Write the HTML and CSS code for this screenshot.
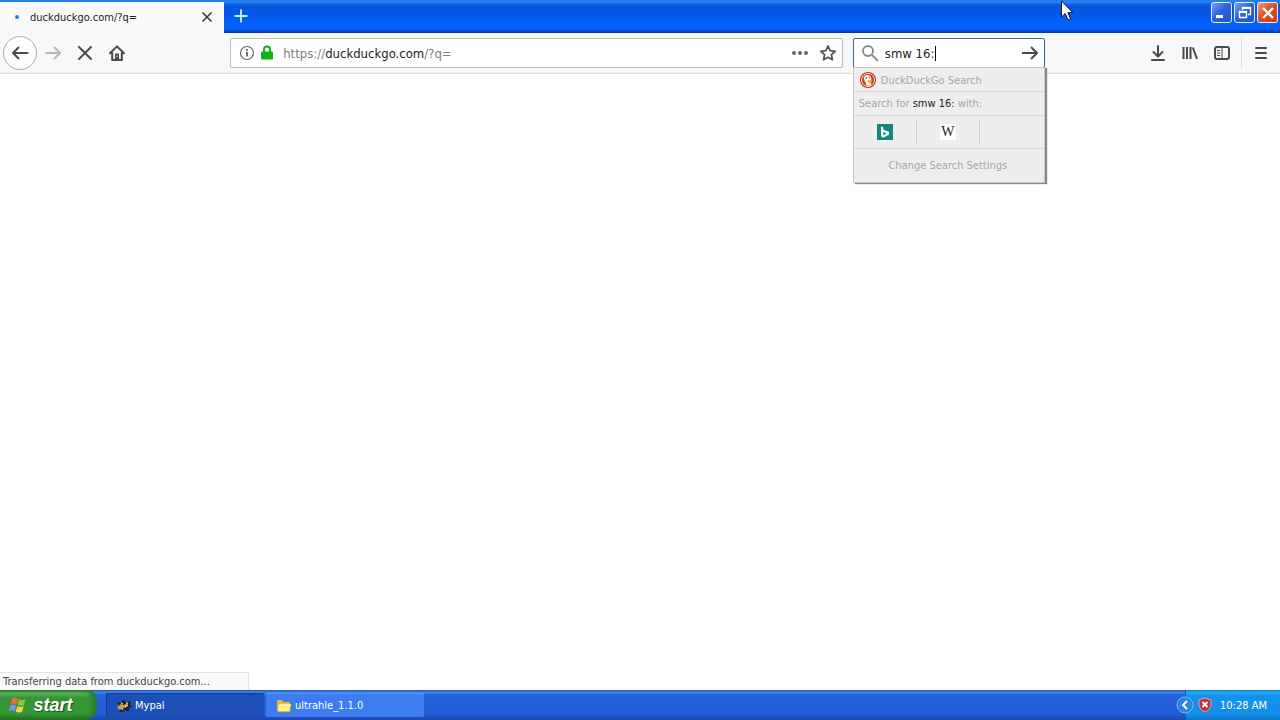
FILE: index.html
```html
<!DOCTYPE html>
<html lang="en">
<head>
<meta charset="utf-8">
<title>duckduckgo.com/?q=</title>
<link rel="stylesheet" href="styles.css">
</head>
<body>
<header class="titlebar">
  <div class="tab">
    <span class="tab-dot"></span>
    <span class="tab-title">duckduckgo.com/?q=</span>
    <button class="tab-close" aria-label="Close tab"><svg width="12" height="12" viewBox="0 0 12 12"><path d="M1.500 1.500l9 9M10.500 1.500l-9 9" stroke="#333" stroke-width="1.500"/></svg></button>
  </div>
  <button class="new-tab" aria-label="New tab"><svg width="16" height="16" viewBox="0 0 16 16"><path d="M8 1.500v13M1.500 8h13" stroke="#d5edff" stroke-width="1.800"/></svg></button>
  <div class="window-buttons">
    <button class="win" aria-label="Minimize"><svg width="20" height="20" viewBox="0 0 20 20"><path d="M4 13.500h7" stroke="#fff" stroke-width="3"/></svg></button>
    <button class="win" aria-label="Restore"><svg width="20" height="20" viewBox="0 0 20 20" fill="none" stroke="#fff"><path d="M7.500 7V4.500h8v7H13" stroke-width="1.400"/><path d="M7 5h9" stroke-width="2"/><path d="M4.500 8.500h7v6h-7z" stroke-width="1.400"/><path d="M4 9h8" stroke-width="2"/></svg></button>
    <button class="win win-close" aria-label="Close"><svg width="20" height="20" viewBox="0 0 20 20"><path d="M5 5l10 10M15 5L5 15" stroke="#fff" stroke-width="2.300"/></svg></button>
  </div>
  <svg class="pointer" width="14" height="22" viewBox="0 0 14 22"><path d="M1.500 1v16l3.700-3.500 2.900 6.500 2.500-1.100-2.800-6.300h4.900z" fill="#fff" stroke="#111830"/></svg>
</header>

<nav class="toolbar">
  <div class="nav-buttons">
    <button class="icon back" aria-label="Back"><svg width="18" height="16" viewBox="0 0 18 16"><path d="M16.500 8H2M7.500 2.500L2 8l5.500 5.500" class="line"/></svg></button>
    <button class="icon" aria-label="Forward" disabled><svg width="18" height="16" viewBox="0 0 18 16"><path d="M2 8h14M10.500 2.500L16 8l-5.500 5.500" class="line faint"/></svg></button>
    <button class="icon" aria-label="Stop"><svg width="16" height="16" viewBox="0 0 16 16"><path d="M2 2l12 12M14 2L2 14" class="line"/></svg></button>
    <button class="icon" aria-label="Home"><svg width="16" height="16" viewBox="0 0 16 16"><path d="M1 8.300L8 1.400l7 6.900M3.200 8v6.900h9.600V8" class="line"/><path d="M6 15V8.500h4V15z" fill="#4a4a4c"/><path d="M8 10.500v1.500" stroke="#f8f8f8"/></svg></button>
  </div>
  <div class="spring"></div>
  <div class="address">
    <svg width="16" height="16" viewBox="0 0 16 16"><circle cx="8" cy="8" r="6.500" fill="none" stroke="#666" stroke-width="1.200"/><path d="M8 7v4.500M8 4v1.800" stroke="#555" stroke-width="1.700"/></svg>
    <svg width="14" height="16" viewBox="0 0 14 16"><path d="M4 7V4.500a3 3 0 016 0V7" fill="none" stroke="#12b312" stroke-width="2"/><rect x="1" y="6.500" width="12" height="8" rx="1" fill="#12b312"/></svg>
    <a class="url" href="#">https://<span class="host">duckduckgo.com</span>/?q=</a>
    <button class="icon small" aria-label="Page actions"><svg width="18" height="16" viewBox="0 0 18 16" fill="#666"><circle cx="3" cy="8" r="2"/><circle cx="9" cy="8" r="2"/><circle cx="15" cy="8" r="2"/></svg></button>
    <button class="icon small" aria-label="Bookmark"><svg width="18" height="18" viewBox="0 0 18 18"><path d="M9 2l2.100 4.700 5.100.6-3.800 3.400 1 5L9 13.200l-4.400 2.500 1-5L1.800 7.300l5.100-.6z" fill="none" stroke="#555" stroke-width="1.800" stroke-linejoin="round"/></svg></button>
  </div>
  <div class="search">
    <svg width="18" height="18" viewBox="0 0 18 18" fill="none" stroke="#8a8a8a" stroke-width="1.800"><circle cx="7" cy="7" r="5"/><path d="M11 11l6 6"/></svg>
    <input class="query" aria-label="Search" value="smw 16:">
    <span class="caret"></span>
    <button class="icon small" aria-label="Go"><svg width="18" height="16" viewBox="0 0 18 16"><path d="M1 8h15M10 2l6 6-6 6" class="line thin"/></svg></button>
    <div class="popup">
      <div class="engine">
        <svg width="16" height="16" viewBox="0 0 16 16"><circle cx="8" cy="8" r="8" fill="#c22b1b"/><circle cx="8" cy="8" r="6.600" fill="#d8401f" stroke="#ffe9d9" stroke-width=".9"/><path d="M3.800 6C4 3.500 6 2.500 8.500 3.200c2.500.6 3 2.500 2.700 4.500l-.7 2.500 1 2.800-3 1-2.500-1C6.500 10.500 4 9 3.800 6z" fill="#fff4e6"/><path d="M7.500 8.200h5L11 10.800 8 10z" fill="#f3a61a"/><circle cx="6.300" cy="6" r=".8" fill="#345"/><circle cx="9.300" cy="5.600" r=".7" fill="#345"/></svg>
        <span>DuckDuckGo Search</span>
      </div>
      <div class="with">Search for <b>smw 16:</b> with:</div>
      <div class="engines">
        <button class="one" aria-label="Bing"><svg width="16" height="16" viewBox="0 0 16 16"><path d="M0 0h16v16H0z" fill="#12897b"/><path d="M4 2.500l2.300.8v2.400l5.700 2v3l-5.700 3L4 12.300zM6.300 7.800v3.400l3-1.800z" fill="#fff" fill-rule="evenodd"/></svg></button>
        <button class="one" aria-label="Wikipedia"><span class="wiki">W</span></button>
      </div>
      <button class="settings">Change Search Settings</button>
    </div>
  </div>
  <div class="spring"></div>
  <div class="tools">
    <button class="icon" aria-label="Downloads"><svg width="16" height="18" viewBox="0 0 16 18"><path d="M8 2v10M3.500 8L8 12.500 12.500 8M2 16h12" class="line"/></svg></button>
    <button class="icon" aria-label="Library"><svg width="16" height="16" viewBox="0 0 16 16"><path d="M1.500 2v12M5 2v12M8.500 2v12M10.800 2.500l4.200 11.500" class="line thin"/></svg></button>
    <button class="icon" aria-label="Sidebars"><svg width="16" height="16" viewBox="0 0 16 16"><rect x="1" y="2" width="14" height="12" rx="2" class="line"/><path d="M8 2v12M3 5.500h3M3 8h3M3 10.500h3" stroke="#4a4a4c"/></svg></button>
  </div>
  <div class="menu"><button class="icon" aria-label="Menu"><svg width="14" height="14" viewBox="0 0 14 14"><path d="M2 2h10M2 7h10M2 12h10" class="line"/></svg></button></div>
</nav>

<main class="page"><div class="status">Transferring data from duckduckgo.com...</div></main>

<footer class="taskbar">
  <button class="start">
    <svg width="19" height="18" viewBox="0 0 19 18"><path d="M3 3c2-1.500 4-1.500 6-.2L7.500 8.500c-2-1.200-4-1.200-6 .2z" fill="#ed6b34"/><path d="M10 3.200c2 1 4 1.200 6.500-.2L15 8.700c-2 1.300-4.300 1.300-6.300.1z" fill="#82cc3e"/><path d="M1.200 9.700c2-1.500 4-1.400 6-.2l-1.500 5.700c-2-1.200-4-1.200-6 .2z" fill="#6a98f4"/><path d="M8.300 10c2 1.100 4.200 1.200 6.400-.1l-1.500 5.700c-2.200 1.300-4.300 1.200-6.400 0z" fill="#f8d33e"/></svg>
    <span>start</span>
  </button>
  <button class="task pressed">
    <svg width="16" height="16" viewBox="0 0 16 16"><path d="M0 4l5 1 2-3 3 2 5-1-1 4 2 2-3 1v3h-3l-1-2-2 3H3l2-4-4-1 2-2z" fill="#242424"/><path d="M1 9l4-3 3 1 4-2-1 4-4 1-3 2z" fill="#d79b43"/><path d="M5 5l2 1M9 9l3-2M6 12l1-2M10 5h2" stroke="#eee"/></svg>
    <span>Mypal</span>
  </button>
  <button class="task">
    <svg width="16" height="16" viewBox="0 0 16 16"><path d="M1 3.500Q1 2 2.500 2H6l1.500 2H13q1 0 1 1v8H2q-1 0-1-1z" fill="#e7bd38"/><path d="M3 6h12.500L14 14H2z" fill="#fff094"/><path d="M2 14h12l1.500-8" fill="none" stroke="#9b812b"/></svg>
    <span>ultrahle_1.1.0</span>
  </button>
  <div class="tray">
    <button class="expand" aria-label="Show hidden icons"><svg width="18" height="18" viewBox="0 0 18 18"><circle cx="9" cy="9" r="8" fill="#2b83df" stroke="#6dbbf4"/><path d="M11 5L7 9l4 4" fill="none" stroke="#fff" stroke-width="2"/></svg></button>
    <svg width="14" height="16" viewBox="0 0 14 16"><path d="M7 1l6 2v4c0 4-2.500 6.500-6 8-3.500-1.500-6-4-6-8V3z" fill="#c72d3c" stroke="#dba4b5"/><path d="M4.500 5l5 5M9.500 5l-5 5" stroke="#fff" stroke-width="1.800"/></svg>
    <time>10:28 AM</time>
  </div>
</footer>
</body>
</html>
```
FILE: styles.css
```css
* { box-sizing: border-box; }
body {
  margin: 0;
  min-height: 100vh;
  display: flex;
  flex-direction: column;
  background: #fff;
  color: #222;
  font: 11px/16px Tahoma, "DejaVu Sans Condensed", "Noto Sans", sans-serif;
}
button {
  display: flex;
  align-items: center;
  justify-content: center;
  margin: 0;
  padding: 0;
  border: 0;
  background: none;
  color: inherit;
  font: inherit;
}
svg { display: block; flex: none; }

.titlebar {
  position: relative;
  display: flex;
  height: 33px;
  background: linear-gradient(#1c7ce8 0, #2884f4 2px, #0a5ae0 5px, #0355e4 12px, #0362fb 24px, #0560fa 29px, #0340c0 32px, #02309c);
}
.tab {
  display: flex;
  align-items: center;
  width: 224px;
  margin-top: 2px;
  padding: 0 10px 1px 15px;
  background: #f9f9fa;
}
.tab-dot { width: 4px; height: 4px; border-radius: 50%; background: #2480e0; }
.tab-title { flex: 1; padding: 1px 0 0 11px; }
.tab-close { width: 14px; height: 16px; }
.new-tab { width: 34px; padding-bottom: 1px; }
.window-buttons { display: flex; gap: 2px; margin: 2px 2px 0 auto; }
.win {
  width: 21px;
  height: 21px;
  border: 1px solid #e4eeff;
  border-radius: 3px;
  background: linear-gradient(135deg, #789ff3, #2d62dc 45%, #1d54d0);
}
.win-close { background: linear-gradient(135deg, #ef9a7d, #dc4a20 50%, #c83b11); }
.pointer { position: absolute; left: 83%; top: 0; margin-left: -2px; }

.toolbar {
  display: flex;
  align-items: center;
  height: 41px;
  padding: 0 3px;
  border-bottom: 1px solid #dcdcdc;
  background: #f8f8f9;
}
.nav-buttons, .tools { display: flex; align-items: center; }
.icon { width: 32px; height: 32px; }
.line { fill: none; stroke: #4a4a4c; stroke-width: 2; stroke-linecap: round; stroke-linejoin: round; }
.thin { stroke-linecap: butt; }
.faint { stroke: #b6b6b8; }
.back {
  width: 34px;
  height: 34px;
  border: 1px solid #adadad;
  border-radius: 50%;
  background: #fdfdfd;
}
.spring { flex: 5; }
.address, .search {
  display: flex;
  align-items: center;
  height: 30px;
  border: 1px solid #bababa;
  border-radius: 2px;
  background: #fff;
  font-size: 13px;
}
.address { flex: 31; gap: 5px; padding: 0 0 0 8px; }
.url { flex: 1; padding: 1px 0 0 4px; color: #808080; text-decoration: none; }
.host { color: #222; }
.small { width: 24px; }
.address .small + .small { margin-right: 2px; margin-left: -1px; }
.search {
  position: relative;
  width: 192px;
  margin-left: 10px;
  padding-left: 7px;
  border-color: #39699c;
}
.query {
  flex: 1;
  min-width: 0;
  height: 26px;
  padding: 0 0 0 6px;
  border: 0;
  outline: 0;
  background: none;
  color: #222;
  font: inherit;
}
.caret { position: absolute; top: 7px; left: 81px; width: 1px; height: 15px; background: #000; }
.search .small { width: 28px; }
.popup {
  position: absolute;
  z-index: 1;
  top: 100%;
  left: -1px;
  right: -1px;
  border: 1px solid #c9c9c9;
  background: #eeeeee;
  box-shadow: 2px 1px 1px #888;
  color: #a5a5a5;
  font-size: 11px;
  clip-path: inset(0 -4px -4px 0);
}
.engine { display: flex; align-items: center; gap: 5px; height: 23px; padding: 1px 6px 0; }
.engine span { padding-top: 1px; }
.with { height: 24px; padding: 4px 5px; border-top: 1px solid #d6d6d6; }
.with b { color: #222; font-weight: normal; }
.engines {
  display: flex;
  height: 33px;
  padding: 5px 0;
  border-top: 1px solid #d6d6d6;
}
.one { width: 63px; border-right: 1px solid #cfcfcf; }
.wiki {
  width: 16px;
  background: #fff;
  color: #222;
  font: 14px/16px "Liberation Serif", serif;
}
.settings { width: 100%; height: 34px; padding-right: 2px; border-top: 1px solid #d6d6d6; }
.tools { padding-right: 3px; }
.menu { padding-left: 3px; border-left: 1px solid #dedede; }

.page { display: flex; flex: 1; align-items: flex-end; }
.status {
  width: 249px;
  height: 18px;
  padding: 1px 0 0 3px;
  border: 1px solid #e3e3e3;
  border-width: 1px 1px 0 0;
  background: #fafafa;
  color: #444;
}

.taskbar {
  display: flex;
  height: 30px;
  background: linear-gradient(#1d4ea8 0, #3f84ec 2px, #2862dc 5px, #245bd7 24px, #1b46ae);
  color: #fff;
}
.start {
  gap: 5px;
  width: 97px;
  margin-right: 9px;
  padding-right: 15px;
  border-radius: 0 10px 12px 0;
  background: linear-gradient(#2c6b2c, #5ab35a 3px, #389338 8px, #359835 24px, #246b24);
  box-shadow: inset -4px 0 5px #28752b;
  color: #fff;
  font: italic bold 18px/24px "Liberation Sans", sans-serif;
  text-shadow: 1px 1px 1px #215021;
}
.task {
  justify-content: flex-start;
  gap: 3px;
  width: 158px;
  height: 24px;
  margin: 3px 2px 0 0;
  padding: 1px 0 0 10px;
  border-radius: 2px;
  background: #3d7cf0;
  box-shadow: inset 0 1px 1px #6098f5;
}
.pressed { background: #1d4fb9; box-shadow: inset 1px 1px 1px #143b8b; }
.tray {
  display: flex;
  align-items: center;
  gap: 4px;
  margin-left: auto;
  padding: 0 13px 0 0;
  border-left: 1px solid #1759b5;
  background: linear-gradient(#1467b8 0, #24b0f4 2px, #1491ea 6px, #1290e9 24px, #1073c8);
}
.expand { margin-left: -10px; }
.tray time { padding: 1px 0 0 4px; }
```
